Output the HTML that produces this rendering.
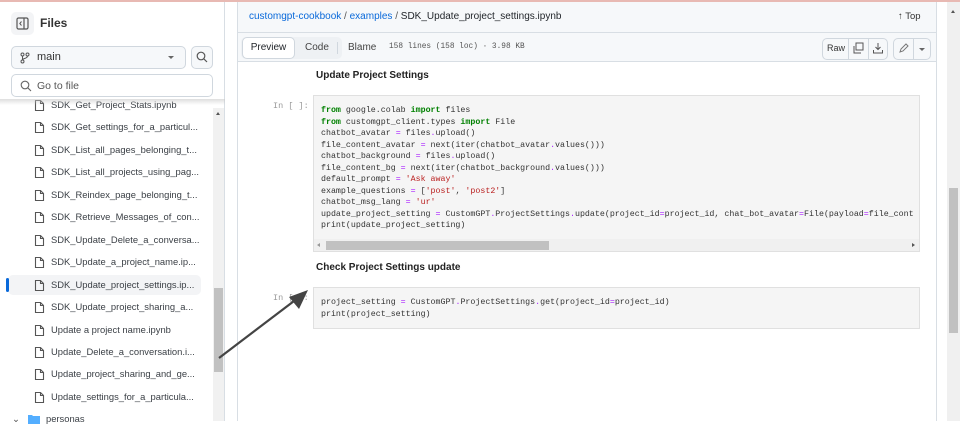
<!DOCTYPE html>
<html><head><meta charset="utf-8"><style>
*{box-sizing:border-box;margin:0;padding:0}
body{width:960px;height:421px;overflow:hidden;background:#fff;font-family:"Liberation Sans",sans-serif;color:#1f2328;position:relative}
.a{position:absolute}
.row{position:absolute;left:34px;font-size:9.4px;color:#3a3f45;height:20px;line-height:20px;white-space:nowrap}
.row svg{position:absolute;left:0;top:4px}
.row span{position:absolute;left:17px}
pre{font-family:"Liberation Mono",monospace;font-size:8.3px;line-height:11.55px;color:#333}
.k{color:#008000;font-weight:bold}.s{color:#ba2121}.o{color:#aa22ff}.p{color:#0055aa}
.btn{position:absolute;border:1px solid #d0d7de;border-radius:5px;background:#f6f8fa;height:22px}
</style></head><body>
<div class="a" style="left:0;top:0;width:960px;height:2px;background:#e8b9b3"></div>
<!-- sidebar -->
<div class="a" style="left:0;top:2px;width:225px;height:419px;background:#fff;border-right:1px solid #d8dee4"></div>
<div id="rows"></div>
<div class="a" style="left:0;top:2px;width:224px;height:97px;background:#fff"></div>
<div class="a" style="left:11px;top:12px;width:23px;height:23px;border-radius:5px;background:#f3f4f6"></div>
<svg class="a" style="left:16px;top:17px" width="13" height="13" viewBox="0 0 13 13"><rect x="1" y="1" width="11" height="11" rx="1.5" fill="none" stroke="#555" stroke-width="1.2"/><line x1="8" y1="1" x2="8" y2="12" stroke="#555" stroke-width="1.2"/><path d="M5.5 4.5 L3.8 6.5 L5.5 8.5" fill="none" stroke="#555" stroke-width="1"/></svg>
<div class="a" style="left:40px;top:16px;font-size:12px;font-weight:bold;color:#333">Files</div>
<div class="a" style="left:11px;top:46px;width:175px;height:23px;border:1px solid #d0d7de;border-radius:5px;background:#f6f8fa"></div>
<svg class="a" style="left:20px;top:52px" width="10" height="12" viewBox="0 0 10 12"><circle cx="2.5" cy="2.5" r="1.5" fill="none" stroke="#555"/><circle cx="7.5" cy="2.5" r="1.5" fill="none" stroke="#555"/><circle cx="2.5" cy="9.5" r="1.5" fill="none" stroke="#555"/><path d="M2.5 4v4M7.5 4c0 3-5 2-5 4" fill="none" stroke="#555"/></svg>
<div class="a" style="left:37px;top:51px;font-size:11px;color:#333">main</div>
<div class="a" style="left:168px;top:56px;width:0;height:0;border-left:3px solid transparent;border-right:3px solid transparent;border-top:3px solid #666"></div>
<div class="a" style="left:191px;top:46px;width:22px;height:23px;border:1px solid #d0d7de;border-radius:5px;background:#f6f8fa"></div>
<svg class="a" style="left:196px;top:51px" width="12" height="12" viewBox="0 0 12 12"><circle cx="5" cy="5" r="3.8" fill="none" stroke="#555" stroke-width="1.2"/><line x1="7.8" y1="7.8" x2="11" y2="11" stroke="#555" stroke-width="1.2"/></svg>
<div class="a" style="left:11px;top:74px;width:202px;height:23px;border:1px solid #d0d7de;border-radius:5px;background:#fff"></div>
<svg class="a" style="left:20px;top:80px" width="12" height="12" viewBox="0 0 12 12"><circle cx="5" cy="5" r="3.8" fill="none" stroke="#666" stroke-width="1.1"/><line x1="7.8" y1="7.8" x2="11" y2="11" stroke="#666" stroke-width="1.1"/></svg>
<div class="a" style="left:37px;top:80px;font-size:10.5px;color:#555">Go to file</div>
<div class="a" style="left:0;top:99px;width:225px;height:6px;background:linear-gradient(rgba(200,200,200,.6),rgba(255,255,255,0))"></div>
<div class="a" style="left:213px;top:108px;width:11px;height:313px;background:#f1f1f1"></div>
<div class="a" style="left:214px;top:288px;width:9px;height:84px;background:#c1c1c1"></div>
<div class="a" style="left:216px;top:112px;border-left:2.5px solid transparent;border-right:2.5px solid transparent;border-bottom:3px solid #555"></div>
<!-- main -->
<div class="a" style="left:237px;top:2px;width:700px;height:419px;border-left:1px solid #d8dee4;border-right:1px solid #d8dee4"></div>
<div class="a" style="left:238px;top:2px;width:698px;height:60px;background:#f6f8fa;border-bottom:1px solid #d8dee4"></div>
<div class="a" style="left:238px;top:32px;width:698px;height:1px;background:#d8dee4"></div>
<div class="a" style="left:249px;top:11px;font-size:10px;color:#555;white-space:nowrap"><span style="color:#0969da">customgpt-cookbook</span> / <span style="color:#0969da">examples</span> / <span style="color:#1f2328">SDK_Update_project_settings.ipynb</span></div>
<div class="a" style="left:898px;top:11px;font-size:9.5px;color:#333">↑ Top</div>
<div class="a" style="left:241px;top:37px;width:101px;height:22px;border-radius:5px;background:#eef1f4"></div>
<div class="a" style="left:242px;top:37px;width:53px;height:22px;border:1px solid #d0d7de;border-radius:5px;background:#fff;font-size:10px;line-height:20px;text-align:center">Preview</div>
<div class="a" style="left:305px;top:42px;font-size:10px;color:#444">Code</div>
<div class="a" style="left:337px;top:42px;width:1px;height:12px;background:#d0d7de"></div>
<div class="a" style="left:348px;top:42px;font-size:10px;color:#444">Blame</div>
<div class="a" style="left:389px;top:43px;font-family:'Liberation Mono',monospace;font-size:7.8px;color:#555">158 lines (158 loc) · 3.98 KB</div>
<div class="btn" style="left:822px;top:38px;width:66px"></div>
<div class="a" style="left:827px;top:43px;font-size:9px;color:#333">Raw</div>
<div class="a" style="left:848px;top:38px;width:1px;height:22px;background:#d0d7de"></div>
<div class="a" style="left:868px;top:38px;width:1px;height:22px;background:#d0d7de"></div>
<svg class="a" style="left:852px;top:42px" width="12" height="12" viewBox="0 0 12 12"><rect x="4" y="1" width="7" height="7" fill="none" stroke="#555"/><path d="M2 4v7h7" fill="none" stroke="#555"/></svg>
<svg class="a" style="left:872px;top:42px" width="12" height="12" viewBox="0 0 12 12"><path d="M6 1v6M3.5 5L6 7.5 8.5 5M1.5 8v3h9V8" fill="none" stroke="#555"/></svg>
<div class="btn" style="left:893px;top:38px;width:38px"></div>
<div class="a" style="left:913px;top:38px;width:1px;height:22px;background:#d0d7de"></div>
<svg class="a" style="left:898px;top:43px" width="11" height="11" viewBox="0 0 11 11"><path d="M2 9l1-3 5-5 2 2-5 5z" fill="none" stroke="#777"/></svg>
<div class="a" style="left:919px;top:48px;border-left:3px solid transparent;border-right:3px solid transparent;border-top:3px solid #666"></div>
<div class="a" style="left:316px;top:70px;font-size:10px;font-weight:bold;color:#222">Update Project Settings</div>
<div class="a" style="left:273px;top:101px;font-family:'Liberation Mono',monospace;font-size:8.5px;color:#999">In [ ]:</div>
<div class="a" style="left:313px;top:95px;width:607px;height:157px;background:#f5f5f5;border:1px solid #e0e0e0;overflow:hidden">
<pre style="position:absolute;left:7px;top:9px">
<span class="k">from</span> google.colab <span class="k">import</span> files
<span class="k">from</span> customgpt_client.types <span class="k">import</span> File
chatbot_avatar <span class="o">=</span> files<span class="o">.</span>upload()
file_content_avatar <span class="o">=</span> next(iter(chatbot_avatar<span class="o">.</span>values()))
chatbot_background <span class="o">=</span> files<span class="o">.</span>upload()
file_content_bg <span class="o">=</span> next(iter(chatbot_background<span class="o">.</span>values()))
default_prompt <span class="o">=</span> <span class="s">'Ask away'</span>
example_questions <span class="o">=</span> [<span class="s">'post'</span>, <span class="s">'post2'</span>]
chatbot_msg_lang <span class="o">=</span> <span class="s">'ur'</span>
update_project_setting <span class="o">=</span> CustomGPT<span class="o">.</span>ProjectSettings<span class="o">.</span>update(project_id<span class="o">=</span>project_id, chat_bot_avatar<span class="o">=</span>File(payload<span class="o">=</span>file_cont
print(update_project_setting)</pre>
<div class="a" style="left:0;top:143px;width:607px;height:13px;background:#f0f0f0"></div>
<div class="a" style="left:12px;top:145px;width:223px;height:9px;background:#c1c1c1"></div>
<div class="a" style="left:3px;top:147px;border-top:2.5px solid transparent;border-bottom:2.5px solid transparent;border-right:3px solid #999"></div>
<div class="a" style="left:598px;top:147px;border-top:2.5px solid transparent;border-bottom:2.5px solid transparent;border-left:3px solid #555"></div>
</div>
<div class="a" style="left:316px;top:262px;font-size:10px;font-weight:bold;color:#222">Check Project Settings update</div>
<div class="a" style="left:273px;top:293px;font-family:'Liberation Mono',monospace;font-size:8.5px;color:#999">In [ ]:</div>
<div class="a" style="left:313px;top:287px;width:607px;height:42px;background:#f5f5f5;border:1px solid #e0e0e0">
<pre style="position:absolute;left:7px;top:9px">project_setting <span class="o">=</span> CustomGPT<span class="o">.</span>ProjectSettings<span class="o">.</span>get(project_id<span class="o">=</span>project_id)
print(project_setting)</pre></div>
<!-- right scrollbar -->
<div class="a" style="left:947px;top:2px;width:13px;height:419px;background:#f0f0f0"></div>
<div class="a" style="left:949px;top:188px;width:9px;height:145px;background:#c1c1c1"></div>
<div class="a" style="left:951px;top:10px;border-left:2.5px solid transparent;border-right:2.5px solid transparent;border-bottom:3px solid #555"></div>
<!-- arrow -->
<svg class="a" style="left:0;top:0" width="960" height="421"><line x1="219" y1="358" x2="298" y2="298" stroke="#444" stroke-width="2.2"/><polygon points="308,290 289,297 299,309" fill="#444"/></svg>
<script>
var n=["SDK_Get_Project_Stats.ipynb","SDK_Get_settings_for_a_particul...","SDK_List_all_pages_belonging_t...","SDK_List_all_projects_using_pag...","SDK_Reindex_page_belonging_t...","SDK_Retrieve_Messages_of_con...","SDK_Update_Delete_a_conversa...","SDK_Update_a_project_name.ip...","SDK_Update_project_settings.ip...","SDK_Update_project_sharing_a...","Update a project name.ipynb","Update_Delete_a_conversation.i...","Update_project_sharing_and_ge...","Update_settings_for_a_particula..."];
var h='<div class="a" style="left:8px;top:275px;width:193px;height:20px;border-radius:5px;background:#f3f4f6"></div><div class="a" style="left:6px;top:278px;width:3px;height:14px;border-radius:2px;background:#0969da"></div>';
for(var i=0;i<n.length;i++){var t=95+i*22.45;h+='<div class="row" style="top:'+t+'px"><svg width="11" height="13" viewBox="0 0 11 13"><path d="M1.5 1.5h5l3 3v7h-8z M6.5 1.5v3h3" fill="none" stroke="#555" stroke-width="1.1"/></svg><span>'+n[i]+'</span></div>';}
h+='<div class="row" style="left:12px;top:409px"><span style="left:0;color:#555">⌄</span><svg style="left:16px;top:5px" width="12" height="10" viewBox="0 0 12 10"><path d="M0 1h4l1 1h7v8H0z" fill="#54aeff"/></svg><span style="left:34px">personas</span></div>';
document.getElementById("rows").innerHTML=h;
</script>
</body></html>
